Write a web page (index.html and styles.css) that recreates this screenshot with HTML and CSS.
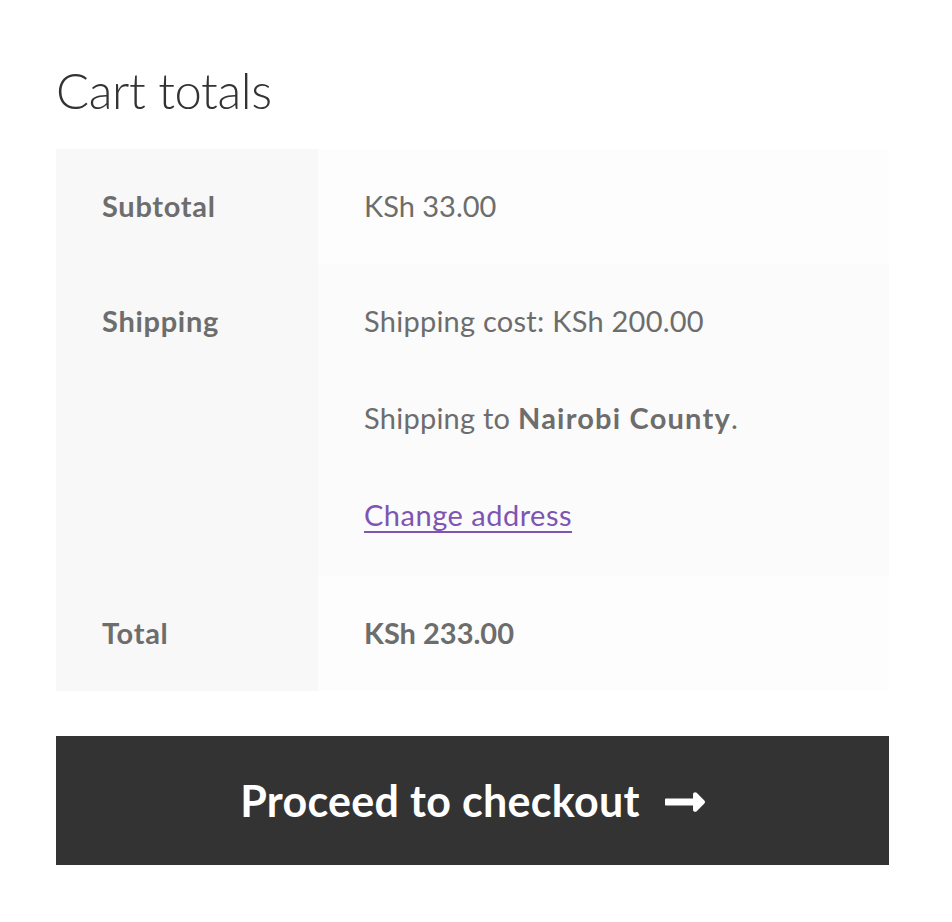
FILE: index.html
```html
<!DOCTYPE html>
<html>
<head>
<meta charset="utf-8">
<link rel="stylesheet" href="styles.css">
</head>
<body>
<div class="cart-totals">
  <h2 class="title">Cart totals</h2>
  <table class="totals">
    <colgroup><col class="col-label"><col></colgroup>
    <tbody>
      <tr class="row-odd">
        <th>Subtotal</th>
        <td>KSh 33.00</td>
      </tr>
      <tr class="row-even">
        <th>Shipping</th>
        <td>
          <p>Shipping cost: KSh 200.00</p>
          <p>Shipping to <strong>Nairobi County</strong>.</p>
          <p class="last"><a href="#">Change address</a></p>
        </td>
      </tr>
      <tr class="row-odd">
        <th>Total</th>
        <td><strong class="grand">KSh 233.00</strong></td>
      </tr>
    </tbody>
  </table>
  <a class="checkout" href="#">Proceed to checkout
    <svg class="arrow" viewBox="0 0 448 512" width="40" height="46" aria-hidden="true"><path fill="#fff" d="M313.941 216H12c-6.627 0-12 5.373-12 12v56c0 6.627 5.373 12 12 12h301.941v46.059c0 21.382 25.851 32.09 40.971 16.971l86.059-86.059c9.373-9.373 9.373-24.569 0-33.941l-86.059-86.059c-15.119-15.119-40.971-4.411-40.971 16.971V216z"/></svg>
  </a>
</div>
</body>
</html>
```

FILE: styles.css
```css
html, body {
  margin: 0;
  padding: 0;
  background: #fff;
}
body {
  font-family: Lato, "Open Sans", sans-serif;
  color: #6d6d6d;
}
.cart-totals {
  width: 833px;
  margin-left: 56px;
  padding-top: 57px;
}
.title {
  margin: 0 0 26px 0;
  font-size: 49px;
  font-weight: 300;
  line-height: 66px;
  color: #333;
  letter-spacing: -0.4px;
}
.totals {
  width: 100%;
  border-collapse: collapse;
  border-spacing: 0;
  table-layout: fixed;
  margin: 0 0 45px 0;
  font-size: 29px;
  line-height: 52px;
}
.col-label {
  width: 262px;
}
.totals th,
.totals td {
  padding: 31px 46px 32px 46px;
  vertical-align: top;
  text-align: left;
}
.totals th {
  background: #f8f8f8;
  font-weight: 700;
  letter-spacing: 0.7px;
}
.row-odd td {
  background: #fdfdfd;
}
.row-even td {
  background: #fbfbfb;
}
.totals p {
  margin: 0 0 45px 0;
  letter-spacing: 0.25px;
}
.totals p.last {
  margin-bottom: 3px;
}
.totals strong {
  font-weight: 700;
  letter-spacing: 1.2px;
}
.totals strong.grand {
  letter-spacing: 0;
}
.totals a {
  color: #7f54b3;
  text-decoration: underline;
  text-underline-offset: 5px;
  text-decoration-thickness: 2px;
  letter-spacing: 0.5px;
}
.checkout {
  display: flex;
  align-items: center;
  justify-content: center;
  gap: 25px;
  height: 129px;
  background: #333;
  color: #fff;
  text-decoration: none;
  font-size: 43px;
  font-weight: 700;
  letter-spacing: 0.3px;
}
.arrow {
  display: block;
  margin-top: 2px;
}
```
